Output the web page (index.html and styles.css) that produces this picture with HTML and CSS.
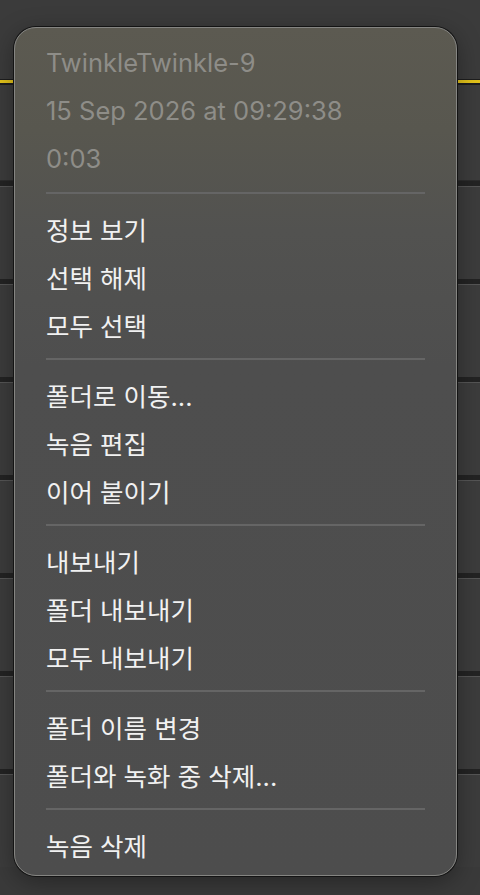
FILE: index.html
```html
<!DOCTYPE html>
<html lang="ko">
<head>
<meta charset="utf-8">
<title>Context menu</title>
<link rel="stylesheet" href="styles.css">
</head>
<body>
<div class="list">
  <div class="list-top"></div>
  <div class="list-row list-row-selected"></div>
  <div class="list-row"></div>
  <div class="list-row"></div>
  <div class="list-row"></div>
  <div class="list-row"></div>
  <div class="list-row"></div>
  <div class="list-row"></div>
  <div class="list-row"></div>
</div>

<div class="menu">
  <div class="menu-section menu-header">
    <div class="menu-item">TwinkleTwinkle-9</div>
    <div class="menu-item">15 Sep 2026 at 09:29:38</div>
    <div class="menu-item">0:03</div>
  </div>
  <div class="menu-sep"></div>
  <div class="menu-section">
    <div class="menu-item">정보 보기</div>
    <div class="menu-item">선택 해제</div>
    <div class="menu-item">모두 선택</div>
  </div>
  <div class="menu-sep"></div>
  <div class="menu-section">
    <div class="menu-item">폴더로 이동...</div>
    <div class="menu-item">녹음 편집</div>
    <div class="menu-item">이어 붙이기</div>
  </div>
  <div class="menu-sep"></div>
  <div class="menu-section">
    <div class="menu-item">내보내기</div>
    <div class="menu-item">폴더 내보내기</div>
    <div class="menu-item">모두 내보내기</div>
  </div>
  <div class="menu-sep"></div>
  <div class="menu-section">
    <div class="menu-item">폴더 이름 변경</div>
    <div class="menu-item">폴더와 녹화 중 삭제...</div>
  </div>
  <div class="menu-sep"></div>
  <div class="menu-section">
    <div class="menu-item">녹음 삭제</div>
  </div>
</div>
</body>
</html>
```

FILE: styles.css
```css
html, body {
  margin: 0;
  padding: 0;
}

body {
  width: 480px;
  height: 895px;
  overflow: hidden;
  background: #3a3a3a;
  position: relative;
  font-family: "Inter", "Noto Sans CJK KR", "Noto Sans", sans-serif;
}

.list {
  display: flex;
  flex-direction: column;
}

.list-top {
  height: 79px;
  background: #3b3b3b;
}

.list-row {
  box-sizing: border-box;
  height: 98px;
  border-top: 5px solid #232323;
  box-shadow: inset 0 1px 0 #555555;
  background: #3c3c3c;
}

.list-row-selected {
  height: 102px;
  border-top: 6px solid #1e1e1e;
  box-shadow: inset 0 -1px 0 #2c2c2c;
  position: relative;
}

.list-row-selected::before {
  content: "";
  position: absolute;
  left: 0;
  right: 0;
  top: -5px;
  height: 3px;
  background: #e3c31a;
}

.menu {
  position: absolute;
  left: 14px;
  top: 27px;
  width: 443px;
  box-sizing: border-box;
  padding: 10px 31px 7px 31px;
  border: 1px solid #858582;
  border-radius: 22px;
  box-shadow: 0 0 0 1px #141414, 0 6px 24px rgba(0, 0, 0, 0.35);
  background: linear-gradient(180deg, #5c5a51 0%, #58574f 12%, #525250 24%, #4e4e4e 40%, #4d4d4d 100%);
}

.menu-section {
  display: flex;
  flex-direction: column;
}

.menu-item {
  height: 48px;
  display: flex;
  align-items: center;
  font-size: 25.5px;
  color: #f1f1f1;
  white-space: nowrap;
}

.menu-header .menu-item {
  color: #8e8d88;
  font-size: 25.5px;
}

.menu-sep {
  height: 22px;
  display: flex;
  align-items: center;
}

.menu-sep::before {
  content: "";
  display: block;
  width: 100%;
  height: 2px;
  background: #656565;
}
```
